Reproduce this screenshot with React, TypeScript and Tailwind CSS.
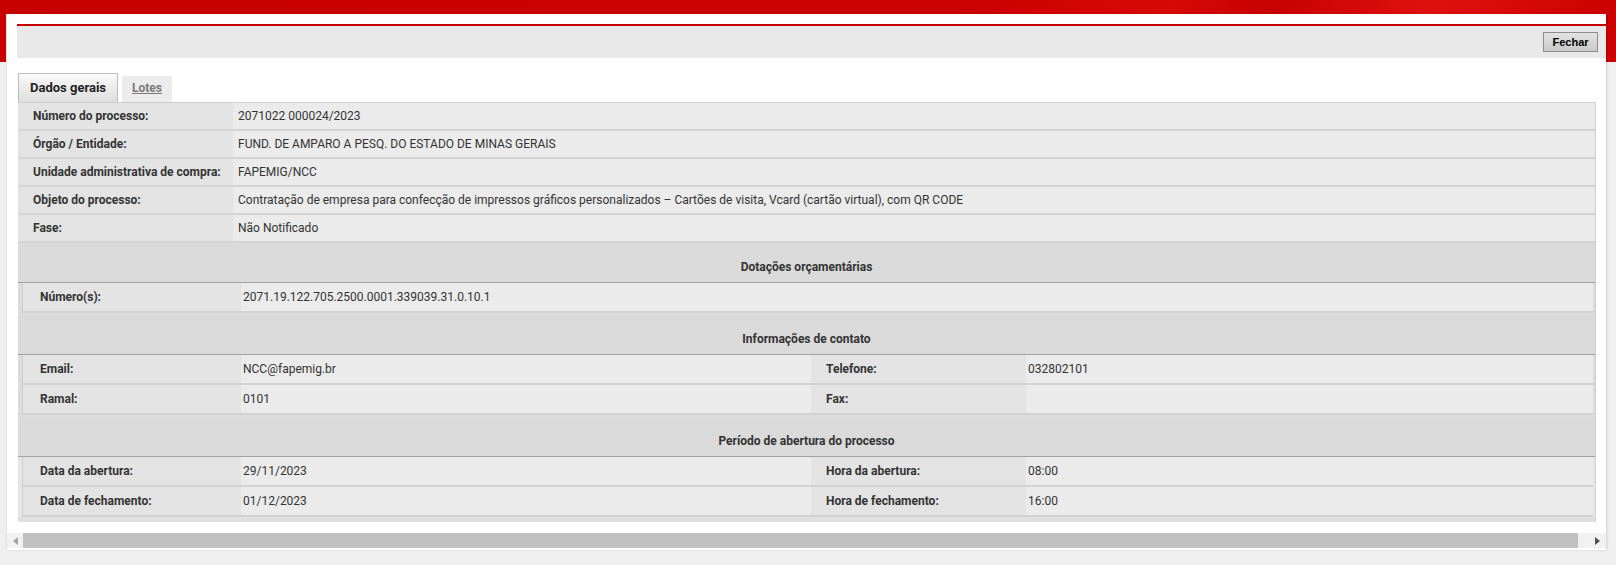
import React from 'react';

const geral = [
  ['Número do processo:', '2071022 000024/2023'],
  ['Órgão / Entidade:', 'FUND. DE AMPARO A PESQ. DO ESTADO DE MINAS GERAIS'],
  ['Unidade administrativa de compra:', 'FAPEMIG/NCC'],
  ['Objeto do processo:', 'Contratação de empresa para confecção de impressos gráficos personalizados – Cartões de visita, Vcard (cartão virtual), com QR CODE'],
  ['Fase:', 'Não Notificado'],
];

const contato = [
  ['Email:', 'NCC@fapemig.br', 'Telefone:', '032802101'],
  ['Ramal:', '0101', 'Fax:', ''],
];

const periodo = [
  ['Data da abertura:', '29/11/2023', 'Hora da abertura:', '08:00'],
  ['Data de fechamento:', '01/12/2023', 'Hora de fechamento:', '16:00'],
];

function SectionHeader({ title }: { title: string }) {
  return (
    <div className="h-[40px] flex items-end justify-center pb-[6px] bg-[#dadada] border-b border-[#a3a3a3] text-[12px] font-bold text-[#333]">
      {title}
    </div>
  );
}

function PairRow({ row }: { row: string[] }) {
  return (
    <div className="flex h-[30px] border-b-2 border-[#d2d2d2] border-l border-l-[#cfcfcf]">
      <div className="w-[218px] shrink-0 bg-[#e3e3e3] pl-[17px] flex items-center font-bold">{row[0]}</div>
      <div className="w-[570px] shrink-0 bg-[#ebebeb] pl-[2px] flex items-center">{row[1]}</div>
      <div className="w-[215px] shrink-0 bg-[#e3e3e3] pl-[15px] flex items-center font-bold">{row[2]}</div>
      <div className="flex-1 bg-[#ebebeb] pl-[2px] flex items-center">{row[3]}</div>
    </div>
  );
}

function ScrollArrow({ dir, dark }: { dir: 'left' | 'right'; dark?: boolean }) {
  return (
    <svg width="5" height="8" viewBox="0 0 5 8">
      {dir === 'left' ? (
        <path d="M5 0 L0 4 L5 8 Z" fill={dark ? '#505050' : '#a3a3a3'} />
      ) : (
        <path d="M0 0 L5 4 L0 8 Z" fill={dark ? '#505050' : '#a3a3a3'} />
      )}
    </svg>
  );
}

export default function App() {
  return (
    <div
      className="w-[1616px] h-[565px] overflow-hidden pt-[14px] bg-[#efefef] text-[#333] text-[12px]"
      style={{ fontFamily: 'Roboto, "Liberation Sans", Arial, sans-serif' }}
    >
      {/* faixa vermelha do topo */}
      <div className="-mt-[14px] h-[62px] bg-[linear-gradient(100deg,#c80000_0%,#cc0000_60%,#d80808_72%,#c70000_78%,#e01010_88%,#cc0000_100%)]" />
      <div className="-mt-[48px] ml-[6px] w-[1600px] h-[536px] bg-white border-l border-[#e2e2e2] shadow-[1px_0_2px_rgba(0,0,0,0.12)] flex flex-col">
        {/* barra superior */}
        <div className="ml-[10px] mt-[10px] border-t-2 border-[#c40000] h-[34px] bg-[#e9e9e9] flex items-center justify-end pr-[8px]">
          <button
            className="h-[20px] w-[55px] border border-[#8d8d8d] bg-[linear-gradient(to_bottom,#e4e4e4,#c9c9c9)] text-[11px] font-bold text-black"
            style={{ fontFamily: '"Liberation Sans", Arial, sans-serif' }}
          >
            Fechar
          </button>
        </div>

        {/* abas */}
        <div className="ml-[11px] mt-[15px] flex items-end gap-[4px] h-[29px]">
          <div className="h-[29px] px-[11px] border border-b-0 border-[#bdbdbd] bg-[linear-gradient(to_bottom,#fafafa,#dedede)] flex items-center text-[13px] font-bold text-[#222]">
            Dados gerais
          </div>
          <div className="h-[26px] px-[10px] pb-[3px] bg-[#ececec] flex items-center text-[12px] font-bold text-[#7a7a7a] underline">
            Lotes
          </div>
        </div>

        {/* tabela */}
        <div className="ml-[11px] w-[1578px] bg-[#e0e0e0] border-t border-[#cfcfcf] border-r border-r-[#d0d0d0] pb-[5px]">
          {geral.map(([k, v]) => (
            <div key={k} className="flex h-[28px] border-b-2 border-[#d4d4d4]">
              <div className="w-[215px] shrink-0 bg-[#e3e3e3] pl-[15px] flex items-center font-bold">{k}</div>
              <div className="flex-1 bg-[#ebebeb] pl-[5px] flex items-center">{v}</div>
            </div>
          ))}

          <SectionHeader title="Dotações orçamentárias" />
          <div className="pl-[4px] pr-[2px] pb-[2px] bg-[#dcdcdc]">
            <div className="flex h-[30px] border-b-2 border-[#d2d2d2] border-l border-l-[#cfcfcf]">
              <div className="w-[218px] shrink-0 bg-[#e3e3e3] pl-[17px] flex items-center font-bold">Número(s):</div>
              <div className="flex-1 bg-[#ebebeb] pl-[2px] flex items-center">2071.19.122.705.2500.0001.339039.31.0.10.1</div>
            </div>
          </div>

          <SectionHeader title="Informações de contato" />
          <div className="pl-[4px] pr-[2px] pb-[2px] bg-[#dcdcdc]">
            {contato.map((r) => (
              <PairRow key={r[0]} row={r} />
            ))}
          </div>

          <SectionHeader title="Período de abertura do processo" />
          <div className="pl-[4px] pr-[2px] bg-[#e6e6e6]">
            {periodo.map((r) => (
              <PairRow key={r[0]} row={r} />
            ))}
          </div>
        </div>

        {/* barra de rolagem horizontal */}
        <div className="mt-auto mb-[2px] h-[15px] flex bg-[#f1f1f1]">
          <div className="w-[16px] flex items-center justify-center">
            <ScrollArrow dir="left" />
          </div>
          <div className="flex-1 bg-[#c1c1c1]" />
          <div className="w-[28px] flex items-center justify-end pr-[6px]">
            <ScrollArrow dir="right" dark />
          </div>
        </div>
      </div>
    </div>
  );
}
